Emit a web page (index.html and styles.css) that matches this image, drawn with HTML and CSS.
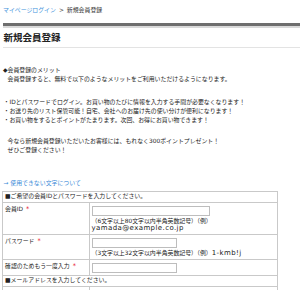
FILE: index.html
```html
<!DOCTYPE html>
<html lang="ja">
<head>
<meta charset="utf-8">
<title>新規会員登録</title>
<link rel="stylesheet" href="styles.css">
</head>
<body>
<div class="page">
  <nav class="crumbs"><a class="crumb-link" href="#">マイページログイン</a><span class="sep">&gt;</span><span class="crumb-current">新規会員登録</span></nav>
  <h1 class="title">新規会員登録</h1>
  <section class="intro">
    <p class="merit-head">◆会員登録のメリット</p>
    <p class="indent lead">会員登録すると、無料で以下のようなメリットをご利用いただけるようになります。</p>
    <ul class="merits">
      <li>・IDとパスワードでログイン。お買い物のたびに情報を入力する手間が必要なくなります！</li>
      <li>・お送り先のリスト保管可能！自宅、会社へのお届け先の使い分けが便利になります！</li>
      <li>・お買い物をするとポイントがたまります。次回、お得にお買い物できます！</li>
    </ul>
    <p class="indent">今なら新規会員登録いただいたお客様には、もれなく300ポイントプレゼント！<br>ぜひご登録ください！</p>
  </section>
  <a class="note-link" href="#">→ 使用できない文字について</a>
  <table class="form">
    <colgroup><col class="c1"><col></colgroup>
    <tr><th class="section" colspan="2">■ご希望の会員IDとパスワードを入力してください。</th></tr>
    <tr>
      <td class="label">会員ID<span class="req">*</span></td>
      <td class="field"><input class="box w-id" type="text"><span class="hint">（6文字以上80文字以内半角英数記号）（例）<br><span class="lat">yamada@example.co.jp</span></span></td>
    </tr>
    <tr>
      <td class="label">パスワード<span class="req">*</span></td>
      <td class="field"><input class="box w-pw" type="password"><span class="hint">（3文字以上32文字以内半角英数記号）（例）<span class="lat">1-kmb!j</span></span></td>
    </tr>
    <tr>
      <td class="label">確認のためもう一度入力<span class="req">*</span></td>
      <td class="field only"><input class="box w-pw" type="password"></td>
    </tr>
    <tr><th class="section" colspan="2">■メールアドレスを入力してください。</th></tr>
    <tr>
      <td class="label">メールアドレス<span class="req">*</span></td>
      <td class="field"><input class="box w-mail" type="text"><span class="hint">（例）<span class="lat">yamada@example.co.jp</span></span></td>
    </tr>
    <tr>
      <td class="label">確認のためもう一度入力<span class="req">*</span></td>
      <td class="field only"><input class="box w-mail" type="text"></td>
    </tr>
  </table>
</div>
</body>
</html>
```
FILE: styles.css
```css
html, body {
  margin: 0;
  padding: 0;
  background: #ffffff;
}
body {
  font-family: "DejaVu Sans", "Noto Sans CJK JP", sans-serif;
  font-size: 5.9px;
  line-height: 9px;
  color: #222222;
}
.page {
  padding: 0 0 0 3px;
}
.crumbs {
  padding-top: 6px;
  height: 9px;
  margin-bottom: 8px;
  white-space: nowrap;
}
.crumb-link {
  color: #3f93dc;
  text-decoration: none;
}
.sep {
  margin: 0 3px 0 3px;
  color: #444444;
}
.crumb-current {
  color: #333333;
}
.title {
  margin: 0;
  border-top: 3px solid #6e6e6e;
  box-shadow: inset 0 2px 0 #d9d9d9;
  border-bottom: 1px solid #e3e3e3;
  padding: 5.5px 0 3.5px 0.5px;
  font-size: 9.5px;
  line-height: 12px;
  font-weight: bold;
  color: #222222;
}
.intro {
  margin-top: 17.5px;
}
.intro p {
  margin: 0;
}
.indent {
  padding-left: 4.6px;
}
.lead {
  margin-bottom: 14px !important;
}
.merits {
  list-style: none;
  margin: 0 0 12px 0;
  padding: 0 0 0 0.5px;
}
.note-link {
  display: block;
  margin-top: 24px;
  color: #3a8ad8;
  text-decoration: none;
  padding-left: 0.5px;
}
.form {
  margin-top: 3px;
  margin-left: -1px;
  width: 276px;
  border-collapse: collapse;
  table-layout: fixed;
}
.c1 {
  width: 87px;
}
.form th,
.form td {
  border: 1px solid #c9c9c9;
  line-height: 7.5px;
  text-align: left;
  font-weight: normal;
}
.section {
  padding: 1px 2px 2px 2px;
}
.label {
  padding: 3px 2px;
  vertical-align: top;
  white-space: nowrap;
}
.req {
  color: #e60012;
  margin-left: 3px;
  font-size: 6.5px;
}
.field {
  padding: 3px 2px 1.5px 1.5px;
  vertical-align: top;
}
.field.only {
  padding-bottom: 2px;
}
.box {
  display: block;
  box-sizing: border-box;
  height: 10px;
  margin: 0 0 1.5px 0;
  padding: 0;
  border: 1px solid #bdbdbd;
  background: #ffffff;
  font-size: 6px;
}
.only .box {
  margin-bottom: 0;
}
.w-id {
  width: 118px;
}
.w-pw {
  width: 85px;
}
.w-mail {
  width: 184px;
}
.hint {
  display: block;
}
.lat {
  font-size: 7px;
  letter-spacing: 0.4px;
}
```
